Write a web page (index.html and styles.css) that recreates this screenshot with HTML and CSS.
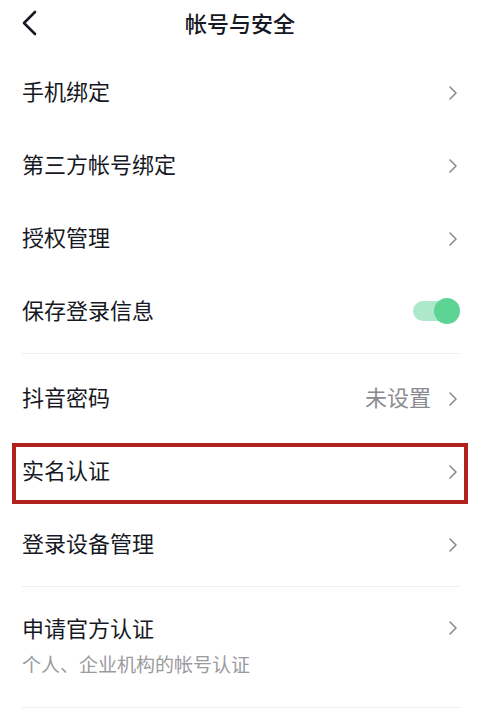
FILE: index.html
```html
<!DOCTYPE html>
<html lang="zh-CN">
<head>
<meta charset="utf-8">
<title>帐号与安全</title>
<link rel="stylesheet" href="styles.css">
</head>
<body>
<div class="page">
  <header class="header">
    <span class="back">
      <svg width="18" height="26" viewBox="0 0 18 26"><path d="M14 2 L3 13 L14 24" fill="none" stroke="#161823" stroke-width="2.6" stroke-linecap="round" stroke-linejoin="round"/></svg>
    </span>
    <h1 class="title">帐号与安全</h1>
  </header>

  <section class="group">
    <div class="row"><span class="label">手机绑定</span><span class="chev"><svg width="10" height="16" viewBox="0 0 10 16"><path d="M2 2 L8 8 L2 14" fill="none" stroke="#8a8b91" stroke-width="1.6" stroke-linecap="round" stroke-linejoin="round"/></svg></span></div>
    <div class="row"><span class="label">第三方帐号绑定</span><span class="chev"><svg width="10" height="16" viewBox="0 0 10 16"><path d="M2 2 L8 8 L2 14" fill="none" stroke="#8a8b91" stroke-width="1.6" stroke-linecap="round" stroke-linejoin="round"/></svg></span></div>
    <div class="row"><span class="label">授权管理</span><span class="chev"><svg width="10" height="16" viewBox="0 0 10 16"><path d="M2 2 L8 8 L2 14" fill="none" stroke="#8a8b91" stroke-width="1.6" stroke-linecap="round" stroke-linejoin="round"/></svg></span></div>
    <div class="row"><span class="label">保存登录信息</span><span class="toggle"><span class="knob"></span></span></div>
  </section>

  <section class="group">
    <div class="row"><span class="label">抖音密码</span><span class="right"><span class="value">未设置</span><span class="chev"><svg width="10" height="16" viewBox="0 0 10 16"><path d="M2 2 L8 8 L2 14" fill="none" stroke="#8a8b91" stroke-width="1.6" stroke-linecap="round" stroke-linejoin="round"/></svg></span></span></div>
    <div class="row highlighted"><span class="label">实名认证</span><span class="chev"><svg width="10" height="16" viewBox="0 0 10 16"><path d="M2 2 L8 8 L2 14" fill="none" stroke="#8a8b91" stroke-width="1.6" stroke-linecap="round" stroke-linejoin="round"/></svg></span></div>
    <div class="row"><span class="label">登录设备管理</span><span class="chev"><svg width="10" height="16" viewBox="0 0 10 16"><path d="M2 2 L8 8 L2 14" fill="none" stroke="#8a8b91" stroke-width="1.6" stroke-linecap="round" stroke-linejoin="round"/></svg></span></div>
  </section>

  <section class="group">
    <div class="item">
      <div class="item-top"><span class="label">申请官方认证</span><span class="chev"><svg width="10" height="16" viewBox="0 0 10 16"><path d="M2 2 L8 8 L2 14" fill="none" stroke="#8a8b91" stroke-width="1.6" stroke-linecap="round" stroke-linejoin="round"/></svg></span></div>
      <div class="sub">个人、企业机构的帐号认证</div>
    </div>
  </section>
</div>
</body>
</html>
```

FILE: styles.css
```css
* { box-sizing: border-box; }
html, body { margin: 0; padding: 0; background: #fff; }
body {
  font-family: "Noto Sans CJK SC", "Noto Sans", sans-serif;
  color: #161823;
  width: 480px;
  height: 720px;
  overflow: hidden;
}
.page { display: flex; flex-direction: column; }
.header {
  position: relative;
  height: 50px;
  display: flex;
  align-items: center;
  justify-content: center;
}
.back {
  position: absolute;
  left: 21px;
  top: 10px;
  display: flex;
}
.title {
  margin: 0 0 6px;
  font-size: 22px;
  font-weight: 500;
  line-height: 30px;
}
.group {
  margin: 0 20px 0 22px;
  padding: 6px 0 5px;
  border-bottom: 1px solid #efeff1;
  display: flex;
  flex-direction: column;
}
.group + .group { padding-top: 8px; }
.row {
  position: relative;
  height: 73px;
  display: flex;
  align-items: center;
  justify-content: space-between;
}
.label { font-size: 22px; line-height: 30px; margin-bottom: 6px; }
.chev { display: flex; align-items: center; margin-right: 2px; }
.right { display: flex; align-items: center; gap: 17px; }
.value { font-size: 22px; line-height: 30px; color: #8a8b91; margin-bottom: 6px; }
.toggle {
  position: relative;
  width: 48px;
  height: 26px;
  display: flex;
  align-items: center;
  margin-bottom: 2px;
}
.toggle::before {
  content: "";
  position: absolute;
  left: 1px;
  right: 8px;
  height: 20px;
  border-radius: 10px;
  background: #aee8cb;
}
.knob {
  position: absolute;
  right: 0;
  width: 26px;
  height: 26px;
  border-radius: 50%;
  background: #5dd494;
}
.highlighted::after {
  content: "";
  position: absolute;
  left: -10px;
  right: -8px;
  top: 8px;
  bottom: 4px;
  border: 4px solid #b1211d;
  pointer-events: none;
}
.item {
  padding: 17px 0 24px;
  display: flex;
  flex-direction: column;
  gap: 8px;
}
.item-top { display: flex; align-items: center; justify-content: space-between; }
.item-top .label { margin-bottom: 0; }
.item-top .chev { margin-top: 2px; }
.sub { font-size: 19px; line-height: 28px; color: #9a9ba0; }
```
